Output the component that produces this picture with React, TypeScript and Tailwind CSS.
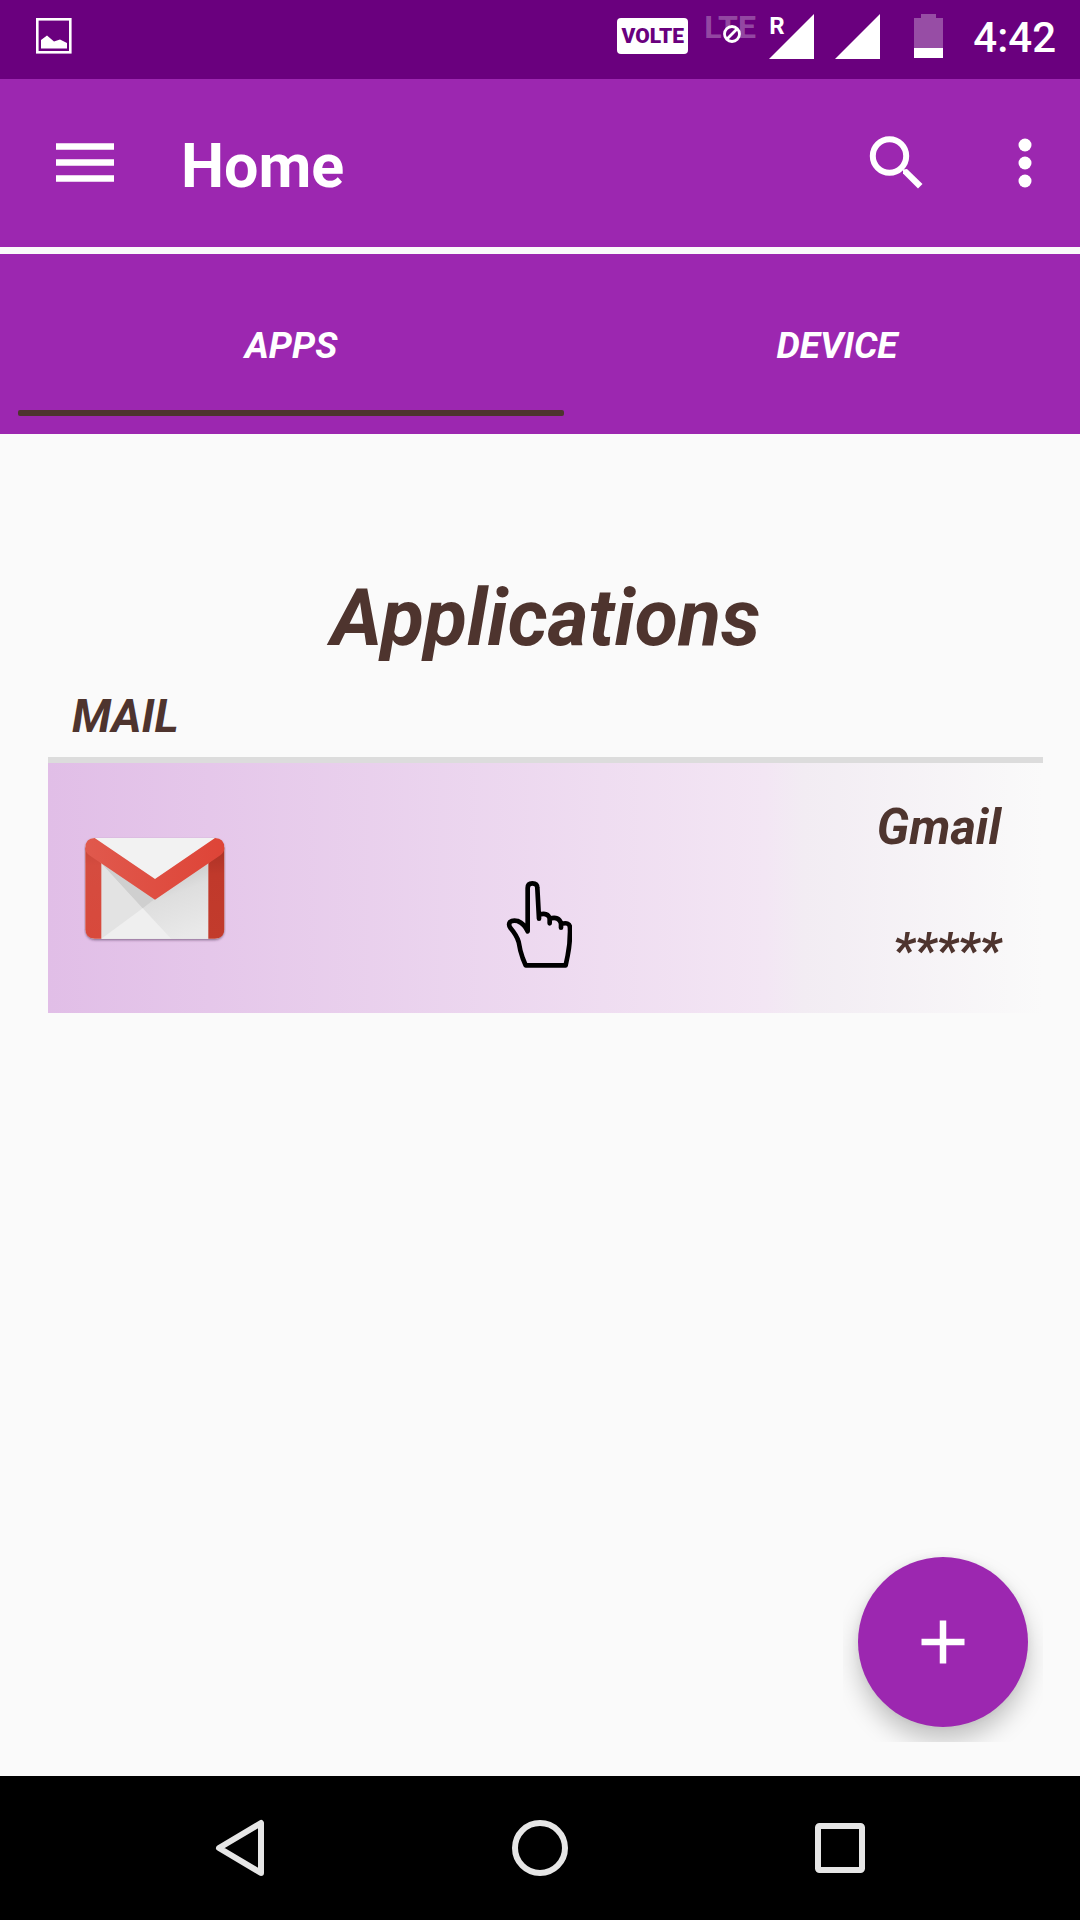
import React from "react";

function StatusBar() {
  return (
    <div className="flex h-[79px] items-start bg-[#6a007e] pl-9 pr-6 text-white">
      <svg className="mt-[18px] size-9" viewBox="0 0 36 36" aria-hidden="true">
        <rect x="1.300" y="1.300" width="33" height="33" fill="none" stroke="white" strokeWidth="2.600" />
        <path d="M5 30.500V22L11 17.500L18 23.500L24 21.500L31 25V30.500Z" fill="white" />
      </svg>
      <div className="ml-auto flex items-start">
        <span className="mt-[18px] flex h-9 w-[71px] items-center justify-center rounded bg-white text-[21px] leading-9 font-black text-[#6a007e]">
          VOLTE
        </span>
        <div className="relative ml-4 w-[53px]">
          <span className="block text-[32px] leading-[54px] font-bold text-white/30">LTE</span>
          <svg className="absolute top-6 left-[18px] size-5" viewBox="0 0 20 20" aria-hidden="true">
            <circle cx="10" cy="10" r="7.500" fill="#6a007e" stroke="white" strokeWidth="2.800" />
            <path d="M4.800 15.200L15.200 4.800" stroke="white" strokeWidth="2.800" />
          </svg>
        </div>
        <div className="relative ml-3 mt-3.5 size-[45px]">
          <svg className="size-[45px]" viewBox="0 0 45 45" aria-hidden="true">
            <path d="M45 0V45H0Z" fill="white" />
          </svg>
          <span className="absolute top-0 left-0 text-2xl leading-6 font-bold">R</span>
        </div>
        <svg className="ml-[21px] mt-3.5 size-[45px]" viewBox="0 0 45 45" aria-hidden="true">
          <path d="M45 0V45H0Z" fill="white" />
        </svg>
        <svg className="ml-[34px] mt-3.5 h-11 w-[29px]" viewBox="0 0 29 44" aria-hidden="true">
          <path d="M7 0H22V4H29V34H0V4H7Z" fill="white" fillOpacity="0.3" />
          <rect y="34" width="29" height="10" fill="white" />
        </svg>
        <span className="ml-[30px] mt-1 text-[42px] leading-[68px] font-medium">4:42</span>
      </div>
    </div>
  );
}

function AppBar() {
  return (
    <header className="flex h-[168px] items-center bg-[#9c27b0] pl-14 pr-12 text-white">
      <button type="button" aria-label="Open menu">
        <svg className="h-10 w-[58px]" viewBox="0 0 58 40" aria-hidden="true">
          <path d="M0 3.500H58M0 19.500H58M0 35.500H58" stroke="white" strokeWidth="6.300" />
        </svg>
      </button>
      <h1 className="ml-[67px] mt-1.5 text-[61px] leading-[72px] font-bold">Home</h1>
      <button type="button" aria-label="Search" className="ml-auto">
        <svg className="size-[54px]" viewBox="0 0 54 54" aria-hidden="true">
          <circle cx="20.500" cy="20" r="16.700" fill="none" stroke="white" strokeWidth="6" />
          <path d="M34 33.500L38 33L53.500 48L49 52.500L34 37.500Z" fill="white" />
        </svg>
      </button>
      <button type="button" aria-label="More options" className="ml-[95px]">
        <svg className="h-[50px] w-3.5" viewBox="0 0 14 50" aria-hidden="true">
          <circle cx="7" cy="7" r="6.500" fill="white" />
          <circle cx="7" cy="25" r="6.500" fill="white" />
          <circle cx="7" cy="43" r="6.500" fill="white" />
        </svg>
      </button>
    </header>
  );
}

function Tabs() {
  const tab = "flex h-[180px] flex-1 flex-col text-[37px] font-bold italic text-white uppercase";
  return (
    <div className="mt-[7px] overflow-hidden bg-[#9c27b0]">
      <div role="tablist" className="-mr-[30px] ml-[18px] flex">
        <button type="button" role="tab" aria-selected="true" className={tab}>
          <span className="mt-[66px] w-full text-center leading-[52px]">Apps</span>
          <span className="mt-auto mb-[18px] h-1.5 w-full rounded-xs bg-[#4e342e]" />
        </button>
        <button type="button" role="tab" aria-selected="false" className={tab}>
          <span className="mt-[66px] w-full text-center leading-[52px]">Device</span>
        </button>
      </div>
    </div>
  );
}

function GmailLogo() {
  return (
    <svg className="mt-1 h-[106px] w-[142px]" viewBox="0 0 426 318" role="img" aria-label="Gmail">
      <defs>
        <linearGradient id="left" x1="0" y1="0" x2="0" y2="1">
          <stop offset="0" stopColor="#c9473b" />
          <stop offset="0.2" stopColor="#d54c3f" />
          <stop offset="1" stopColor="#d8493c" />
        </linearGradient>
        <linearGradient id="right" x1="0" y1="0" x2="0" y2="1">
          <stop offset="0" stopColor="#a93226" />
          <stop offset="0.3" stopColor="#c0392b" />
          <stop offset="1" stopColor="#c23b2c" />
        </linearGradient>
        <linearGradient id="flap" x1="0" y1="0" x2="1" y2="0">
          <stop offset="0" stopColor="#e0594d" />
          <stop offset="1" stopColor="#de4437" />
        </linearGradient>
        <linearGradient id="fold" x1="0.5" y1="0.2" x2="0.9" y2="0.9">
          <stop offset="0" stopColor="#cacaca" />
          <stop offset="0.35" stopColor="#dedede" />
          <stop offset="1" stopColor="#e9e9e9" />
        </linearGradient>
        <filter id="cast" x="-10%" y="-10%" width="120%" height="125%">
          <feDropShadow dx="0" dy="4" stdDeviation="3" floodColor="#3a2040" floodOpacity="0.55" />
        </filter>
      </defs>
      <g filter="url(#cast)">
        <rect x="4" y="3" width="417" height="302" rx="28" fill="#e4e4e4" />
      </g>
      <path d="M52 3H373V305H52Z" fill="#e3e3e3" />
      <path d="M52 78L213 185L373 78V305H262Z" fill="url(#fold)" />
      <path d="M52 78L213 185L176 214Z" fill="#cfcfcf" />
      <path d="M52 305L176 214L262 305Z" fill="#efefef" />
      <path d="M28 3H397L213 126Z" fill="#f2f2f2" />
      <path d="M4 31L52 78V305H32Q4 305 4 277Z" fill="url(#left)" />
      <path d="M421 31L373 78V305H393Q421 305 421 277Z" fill="url(#right)" />
      <path
        d="M32 3L213 126L393 3Q421 4 421 32Q421 46 409 55L213 188L16 55Q4 46 4 32Q4 4 32 3Z"
        fill="url(#flap)"
      />
    </svg>
  );
}

function PointingHand() {
  return (
    <svg
      className="absolute top-[117px] left-[46%] h-[88px] w-[66px]"
      viewBox="77 58 198 264"
      fill="none"
      stroke="black"
      strokeWidth="14"
      strokeLinecap="round"
      strokeLinejoin="round"
      aria-hidden="true"
    >
      <path d="M142 212V82Q142 68 156 68Q171 68 171 82L176 174V162Q202 154 208 173V188V174Q236 166 242 188V201V190Q269 182 269 203Q270 245 262 285L256 314H136L127 292Q119 270 115 244Q109 224 91 203Q83 192 89 184Q96 178 112 181Q133 190 142 212Z" />
    </svg>
  );
}

function NavBar() {
  const item = "flex flex-1 items-center justify-center";
  return (
    <nav aria-label="System" className="flex h-36 bg-black px-[90px]">
      <button type="button" aria-label="Back" className={item}>
        <svg className="size-[60px]" viewBox="0 0 60 60" fill="none" stroke="#e6e6e6" strokeWidth="6" strokeLinejoin="round" aria-hidden="true">
          <path d="M51 5V55L9 30Z" />
        </svg>
      </button>
      <button type="button" aria-label="Home screen" className={item}>
        <svg className="size-[60px]" viewBox="0 0 60 60" fill="none" stroke="#e6e6e6" strokeWidth="6" aria-hidden="true">
          <circle cx="30" cy="30" r="25" />
        </svg>
      </button>
      <button type="button" aria-label="Recent apps" className={item}>
        <svg className="size-[60px]" viewBox="0 0 60 60" fill="none" stroke="#e6e6e6" strokeWidth="6" aria-hidden="true">
          <rect x="8" y="8" width="44" height="44" rx="1.500" />
        </svg>
      </button>
    </nav>
  );
}

export default function App() {
  return (
    <div className="flex min-h-screen flex-col bg-[#fafafa] font-[Roboto,sans-serif] text-[#4e342e]">
      <StatusBar />
      <AppBar />
      <Tabs />
      <main className="relative flex-1 pt-[136px] pr-[37px] pl-12 font-bold italic">
        <h2 className="text-center text-[79px] leading-[96px]">Applications</h2>
        <section className="mt-[18px]">
          <h3 className="border-b-[6px] border-[#dcdcdc] pb-[9px] pl-6 text-[46px] leading-[64px]">MAIL</h3>
          <div className="relative flex h-[250px] items-center justify-between bg-[linear-gradient(to_right,#e1bee7,#f3e6f4_72%,#f2ecf3_76%,#fafafa)] pr-[42px] pl-9">
            <GmailLogo />
            <PointingHand />
            <div className="mt-1 flex flex-col items-end gap-16 text-[49px] leading-[60px]">
              <span>Gmail</span>
              <span>*****</span>
            </div>
          </div>
        </section>
        <div className="absolute right-[37px] bottom-[34px] overflow-hidden p-[15px]">
          <button
            type="button"
            aria-label="Add application"
            className="flex size-[170px] items-center justify-center rounded-full bg-[#9c27b0] shadow-[0_14px_24px_rgba(0,0,0,0.22),0_0_8px_rgba(0,0,0,0.06)]"
          >
            <svg className="size-11" viewBox="0 0 44 44" aria-hidden="true">
              <path d="M22 0.500V43.500M0.500 22H43.500" stroke="white" strokeWidth="6.500" />
            </svg>
          </button>
        </div>
      </main>
      <NavBar />
    </div>
  );
}
